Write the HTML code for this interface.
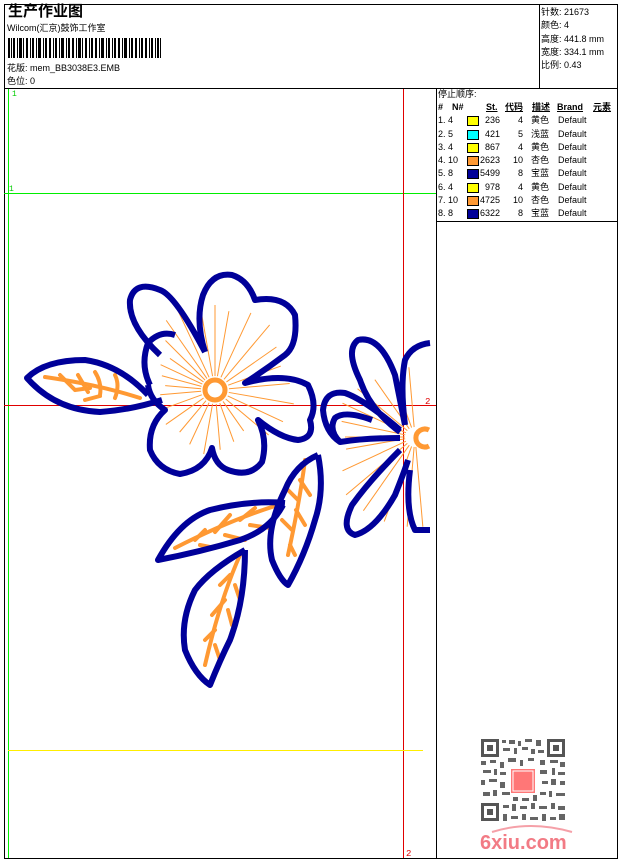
<!DOCTYPE html>
<html><head><meta charset="utf-8"><style>
*{margin:0;padding:0}
body{width:620px;height:860px;background:#fff;position:relative;overflow:hidden;font-family:"Liberation Sans","Noto Sans CJK SC",sans-serif;color:#000}
.t{position:absolute;white-space:nowrap;font-size:9px;line-height:10px}
.r{position:relative;height:13.3px;width:180px;white-space:nowrap}
.r span{position:absolute;white-space:nowrap}
</style></head><body>
<svg width="620" height="860" style="position:absolute;left:0;top:0">
<rect x="4.5" y="4.5" width="613" height="854" fill="none" stroke="#000" stroke-width="1"/>
<line x1="4" y1="88.5" x2="618" y2="88.5" stroke="#000"/>
<line x1="539.5" y1="4" x2="539.5" y2="88" stroke="#000"/>
<line x1="436.5" y1="88" x2="436.5" y2="858" stroke="#000"/>
<line x1="436" y1="221.5" x2="618" y2="221.5" stroke="#000"/>
<g fill="#000">
<rect x="8" y="38" width="2" height="20"/><rect x="11" y="38" width="1" height="20"/><rect x="13" y="38" width="2" height="20"/><rect x="17" y="38" width="1" height="20"/><rect x="19" y="38" width="3" height="20"/><rect x="23" y="38" width="1" height="20"/><rect x="26" y="38" width="2" height="20"/><rect x="30" y="38" width="1" height="20"/><rect x="32" y="38" width="2" height="20"/><rect x="36" y="38" width="1" height="20"/><rect x="38" y="38" width="3" height="20"/><rect x="43" y="38" width="1" height="20"/><rect x="45" y="38" width="2" height="20"/><rect x="49" y="38" width="2" height="20"/><rect x="53" y="38" width="1" height="20"/><rect x="55" y="38" width="2" height="20"/><rect x="59" y="38" width="1" height="20"/><rect x="61" y="38" width="3" height="20"/><rect x="66" y="38" width="1" height="20"/><rect x="68" y="38" width="2" height="20"/><rect x="72" y="38" width="2" height="20"/><rect x="76" y="38" width="1" height="20"/><rect x="78" y="38" width="3" height="20"/><rect x="82" y="38" width="1" height="20"/><rect x="85" y="38" width="2" height="20"/><rect x="89" y="38" width="1" height="20"/><rect x="91" y="38" width="2" height="20"/><rect x="95" y="38" width="2" height="20"/><rect x="99" y="38" width="1" height="20"/><rect x="101" y="38" width="3" height="20"/><rect x="106" y="38" width="1" height="20"/><rect x="108" y="38" width="2" height="20"/><rect x="112" y="38" width="1" height="20"/><rect x="114" y="38" width="2" height="20"/><rect x="118" y="38" width="2" height="20"/><rect x="122" y="38" width="1" height="20"/><rect x="124" y="38" width="3" height="20"/><rect x="129" y="38" width="1" height="20"/><rect x="131" y="38" width="2" height="20"/><rect x="135" y="38" width="2" height="20"/><rect x="139" y="38" width="1" height="20"/><rect x="141" y="38" width="2" height="20"/><rect x="145" y="38" width="2" height="20"/><rect x="149" y="38" width="1" height="20"/><rect x="151" y="38" width="2" height="20"/><rect x="155" y="38" width="1" height="20"/><rect x="157" y="38" width="2" height="20"/><rect x="160" y="38" width="1" height="20"/>
</g>
<line x1="8.5" y1="89" x2="8.5" y2="858" stroke="#00ee00"/>
<line x1="4" y1="193.5" x2="436" y2="193.5" stroke="#00ee00"/>
<line x1="403.5" y1="89" x2="403.5" y2="858" stroke="#e00000"/>
<line x1="4" y1="405.5" x2="436" y2="405.5" stroke="#e00000"/>
<line x1="8" y1="750.5" x2="423" y2="750.5" stroke="#ffee00"/>
<text x="12" y="96" font-size="8" fill="#00cc00" font-family="Liberation Mono">1</text>
<text x="9" y="191" font-size="8" fill="#00cc00" font-family="Liberation Mono">1</text>
<text x="425" y="404" font-size="9" fill="#e00000" font-family="Liberation Mono">2</text>
<text x="406" y="856" font-size="9" fill="#e00000" font-family="Liberation Mono">2</text>
<g stroke="#ff9933" stroke-width="1">
<g transform="translate(215,390)">
<line x1="14" y1="0" x2="75" y2="0" transform="rotate(-100)"/><line x1="14" y1="0" x2="90" y2="0" transform="rotate(-115)"/><line x1="14" y1="0" x2="85" y2="0" transform="rotate(-125)"/><line x1="14" y1="0" x2="70" y2="0" transform="rotate(-135)"/><line x1="14" y1="0" x2="55" y2="0" transform="rotate(-145)"/><line x1="14" y1="0" x2="60" y2="0" transform="rotate(-155)"/><line x1="14" y1="0" x2="55" y2="0" transform="rotate(-165)"/><line x1="14" y1="0" x2="50" y2="0" transform="rotate(-175)"/><line x1="14" y1="0" x2="55" y2="0" transform="rotate(175)"/><line x1="14" y1="0" x2="55" y2="0" transform="rotate(160)"/><line x1="14" y1="0" x2="60" y2="0" transform="rotate(145)"/><line x1="14" y1="0" x2="55" y2="0" transform="rotate(130)"/><line x1="14" y1="0" x2="60" y2="0" transform="rotate(115)"/><line x1="14" y1="0" x2="65" y2="0" transform="rotate(100)"/><line x1="14" y1="0" x2="60" y2="0" transform="rotate(85)"/><line x1="14" y1="0" x2="55" y2="0" transform="rotate(70)"/><line x1="14" y1="0" x2="50" y2="0" transform="rotate(55)"/><line x1="14" y1="0" x2="70" y2="0" transform="rotate(40)"/><line x1="14" y1="0" x2="75" y2="0" transform="rotate(25)"/><line x1="14" y1="0" x2="80" y2="0" transform="rotate(10)"/><line x1="14" y1="0" x2="75" y2="0" transform="rotate(-5)"/><line x1="14" y1="0" x2="70" y2="0" transform="rotate(-20)"/><line x1="14" y1="0" x2="75" y2="0" transform="rotate(-35)"/><line x1="14" y1="0" x2="85" y2="0" transform="rotate(-50)"/><line x1="14" y1="0" x2="85" y2="0" transform="rotate(-65)"/><line x1="14" y1="0" x2="80" y2="0" transform="rotate(-80)"/><line x1="14" y1="0" x2="85" y2="0" transform="rotate(-90)"/>
</g>
<g transform="translate(415,437)">
<line x1="10" y1="0" x2="70" y2="0" transform="rotate(-95)"/><line x1="10" y1="0" x2="70" y2="0" transform="rotate(-110)"/><line x1="10" y1="0" x2="70" y2="0" transform="rotate(-125)"/><line x1="10" y1="0" x2="75" y2="0" transform="rotate(-140)"/><line x1="10" y1="0" x2="80" y2="0" transform="rotate(-155)"/><line x1="10" y1="0" x2="75" y2="0" transform="rotate(-168)"/><line x1="10" y1="0" x2="70" y2="0" transform="rotate(-180)"/><line x1="10" y1="0" x2="70" y2="0" transform="rotate(170)"/><line x1="10" y1="0" x2="80" y2="0" transform="rotate(155)"/><line x1="10" y1="0" x2="90" y2="0" transform="rotate(140)"/><line x1="10" y1="0" x2="90" y2="0" transform="rotate(125)"/><line x1="10" y1="0" x2="90" y2="0" transform="rotate(110)"/><line x1="10" y1="0" x2="90" y2="0" transform="rotate(95)"/><line x1="10" y1="0" x2="90" y2="0" transform="rotate(85)"/>
</g>
</g>
<circle cx="215" cy="390" r="10" fill="none" stroke="#ff9933" stroke-width="5"/>
<path d="M429,430 A9,9 0 1,0 429,446" fill="none" stroke="#ff9933" stroke-width="5"/>
<g stroke="#ff9933" stroke-width="4" fill="none" stroke-linecap="round">
<path d="M45,377 Q100,385 140,398"/><path d="M60,375 L75,390 M78,375 L88,392 M95,372 Q102,383 100,395 M115,375 Q120,385 115,398 M75,390 L90,388 M85,400 L100,396"/>
<path d="M278,505 Q230,520 175,548"/><path d="M195,540 L205,530 M215,532 L230,515 M240,520 L255,508 M200,545 L215,548 M225,535 L245,540 M250,525 L270,528"/>
<path d="M305,460 Q300,500 288,555"/><path d="M300,480 L310,495 M298,500 L288,490 M296,510 L305,525 M292,530 L282,520 M290,545 L295,555"/>
<path d="M240,555 Q220,600 205,665"/><path d="M230,575 L220,585 M235,585 L240,600 M225,600 L212,615 M228,610 L232,625 M215,630 L205,640 M215,645 L220,660"/>
</g>
<g fill="none" stroke="#000099" stroke-width="6" stroke-linejoin="round">
<path d="M205,352 Q195,320 203,295 Q212,272 232,275 Q248,280 255,300 Q285,295 295,315 Q298,345 285,355 Q265,370 245,383 Q285,372 308,385 Q318,405 310,420 Q315,438 298,440 Q280,438 258,420 Q268,440 262,462 Q250,478 228,470 Q215,465 212,448 Q205,470 180,474 Q158,470 150,450 Q148,425 165,410 Q150,400 148,385 M175,335 Q160,330 148,343 Q140,365 150,385 M205,352 Q175,295 160,290 Q135,280 130,300 Q128,325 160,355"/>
<path d="M148,395 Q120,365 85,360 Q45,360 27,378 Q55,410 100,412 Q130,410 162,400"/>
<path d="M285,503 Q250,500 210,510 Q180,520 158,560 Q200,552 240,540 Q270,530 283,505"/>
<path d="M318,455 Q295,465 285,490 Q265,530 272,560 Q280,580 288,585 Q305,555 315,520 Q325,490 318,455"/>
<path d="M245,550 Q210,570 195,590 Q180,620 185,650 Q195,675 210,685 Q220,660 230,640 Q245,600 245,550"/>
<path d="M400,432 Q370,410 360,380 Q345,350 358,340 Q380,335 395,375 Q400,400 405,425 M405,425 Q400,385 405,360 Q412,345 430,343 M400,438 Q365,438 340,442 Q328,430 335,418 Q345,410 372,420 M340,442 Q325,432 323,410 Q325,390 345,393 Q365,400 400,430 M400,450 Q370,480 352,505 Q340,530 355,535 Q375,530 395,495 Q405,470 408,460 M410,470 Q405,510 415,530 L430,530"/>
</g>
<g fill="#555">
<rect x="481" y="739" width="18" height="18"/><rect x="547" y="739" width="18" height="18"/><rect x="481" y="803" width="18" height="18"/>
</g>
<g fill="#fff"><rect x="484" y="742" width="12" height="12"/><rect x="550" y="742" width="12" height="12"/><rect x="484" y="806" width="12" height="12"/></g>
<g fill="#555"><rect x="487" y="745" width="6" height="6"/><rect x="553" y="745" width="6" height="6"/><rect x="487" y="809" width="6" height="6"/></g>
<g fill="#555" opacity="0.9">
<rect x="502" y="740" width="4" height="3"/><rect x="509" y="740" width="6" height="4"/><rect x="518" y="741" width="3" height="5"/><rect x="525" y="739" width="7" height="3"/><rect x="536" y="740" width="5" height="6"/><rect x="503" y="748" width="7" height="3"/><rect x="514" y="748" width="3" height="6"/><rect x="522" y="747" width="6" height="3"/><rect x="531" y="749" width="4" height="5"/><rect x="538" y="750" width="6" height="3"/>
<rect x="481" y="761" width="5" height="4"/><rect x="490" y="760" width="6" height="3"/><rect x="500" y="762" width="4" height="6"/><rect x="508" y="758" width="8" height="4"/><rect x="520" y="760" width="3" height="6"/><rect x="528" y="758" width="6" height="3"/><rect x="540" y="760" width="5" height="5"/><rect x="550" y="760" width="8" height="3"/><rect x="560" y="762" width="5" height="5"/>
<rect x="483" y="770" width="8" height="3"/><rect x="494" y="769" width="3" height="6"/><rect x="500" y="772" width="6" height="3"/><rect x="540" y="770" width="7" height="4"/><rect x="552" y="768" width="3" height="7"/><rect x="558" y="772" width="7" height="3"/>
<rect x="481" y="780" width="4" height="5"/><rect x="489" y="779" width="8" height="3"/><rect x="500" y="782" width="5" height="6"/><rect x="542" y="781" width="6" height="3"/><rect x="551" y="779" width="5" height="6"/><rect x="560" y="781" width="5" height="4"/>
<rect x="483" y="792" width="7" height="4"/><rect x="493" y="790" width="4" height="6"/><rect x="502" y="792" width="8" height="3"/><rect x="513" y="797" width="5" height="4"/><rect x="522" y="798" width="7" height="3"/><rect x="533" y="795" width="4" height="6"/><rect x="540" y="792" width="6" height="3"/><rect x="549" y="791" width="3" height="6"/><rect x="556" y="793" width="9" height="3"/>
<rect x="503" y="805" width="6" height="3"/><rect x="512" y="804" width="4" height="7"/><rect x="520" y="806" width="7" height="3"/><rect x="531" y="803" width="4" height="6"/><rect x="539" y="806" width="8" height="3"/><rect x="551" y="803" width="4" height="6"/><rect x="558" y="806" width="7" height="4"/>
<rect x="503" y="814" width="4" height="7"/><rect x="511" y="816" width="7" height="3"/><rect x="522" y="814" width="4" height="6"/><rect x="530" y="817" width="8" height="3"/><rect x="542" y="814" width="4" height="7"/><rect x="550" y="817" width="6" height="3"/><rect x="559" y="814" width="6" height="6"/>
</g>
<rect x="511" y="769" width="24" height="24" fill="#ff7777"/>
<rect x="513" y="771" width="20" height="20" fill="none" stroke="#fff" stroke-width="1"/>
<text x="480" y="849" font-size="20" font-weight="bold" fill="#f27b85" font-family="Liberation Sans">6xiu.com</text>
<path d="M492,832 Q530,820 572,832" fill="none" stroke="#f5a0a8" stroke-width="2"/>
</svg>
<div class="t" style="left:8px;top:3px;font-size:15px;line-height:18px;font-weight:bold">生产作业图</div>
<div class="t" style="left:7px;top:23px">Wilcom(汇京)鼓饰工作室</div>
<div class="t" style="left:7px;top:63px">花版: mem_BB3038E3.EMB</div>
<div class="t" style="left:7px;top:76px">色位: 0</div>
<div class="t" style="left:541px;top:6px;line-height:13.3px">针数: 21673<br>颜色: 4<br>高度: 441.8 mm<br>宽度: 334.1 mm<br>比例: 0.43</div>
<div class="t" style="left:438px;top:89px">停止顺序:</div>
<div style="position:absolute;left:438px;top:101px;font-size:9px;line-height:13.3px;width:180px">
<div class="r" style="font-weight:bold">
<span style="left:0">#</span><span style="left:14px">N#</span><span style="left:48px;text-decoration:underline">St.</span><span style="left:67px;text-decoration:underline">代码</span><span style="left:94px;text-decoration:underline">描述</span><span style="left:119px;text-decoration:underline">Brand</span><span style="left:155px;text-decoration:underline">元素</span>
</div>
<div class="r"><span style="left:0">1. 4</span><span style="left:29px;top:2px;width:10px;height:8px;background:#ffff00;border:1px solid #000"></span><span style="left:44px;width:18px;text-align:right">236</span><span style="left:65px;width:20px;text-align:right">4</span><span style="left:93px">黄色</span><span style="left:120px">Default</span></div>
<div class="r"><span style="left:0">2. 5</span><span style="left:29px;top:2px;width:10px;height:8px;background:#00ffff;border:1px solid #000"></span><span style="left:44px;width:18px;text-align:right">421</span><span style="left:65px;width:20px;text-align:right">5</span><span style="left:93px">浅蓝</span><span style="left:120px">Default</span></div>
<div class="r"><span style="left:0">3. 4</span><span style="left:29px;top:2px;width:10px;height:8px;background:#ffff00;border:1px solid #000"></span><span style="left:44px;width:18px;text-align:right">867</span><span style="left:65px;width:20px;text-align:right">4</span><span style="left:93px">黄色</span><span style="left:120px">Default</span></div>
<div class="r"><span style="left:0">4. 10</span><span style="left:29px;top:2px;width:10px;height:8px;background:#ff9933;border:1px solid #000"></span><span style="left:41px;width:21px;text-align:right">2623</span><span style="left:65px;width:20px;text-align:right">10</span><span style="left:93px">杏色</span><span style="left:120px">Default</span></div>
<div class="r"><span style="left:0">5. 8</span><span style="left:29px;top:2px;width:10px;height:8px;background:#000099;border:1px solid #000"></span><span style="left:41px;width:21px;text-align:right">5499</span><span style="left:65px;width:20px;text-align:right">8</span><span style="left:93px">宝蓝</span><span style="left:120px">Default</span></div>
<div class="r"><span style="left:0">6. 4</span><span style="left:29px;top:2px;width:10px;height:8px;background:#ffff00;border:1px solid #000"></span><span style="left:44px;width:18px;text-align:right">978</span><span style="left:65px;width:20px;text-align:right">4</span><span style="left:93px">黄色</span><span style="left:120px">Default</span></div>
<div class="r"><span style="left:0">7. 10</span><span style="left:29px;top:2px;width:10px;height:8px;background:#ff9933;border:1px solid #000"></span><span style="left:41px;width:21px;text-align:right">4725</span><span style="left:65px;width:20px;text-align:right">10</span><span style="left:93px">杏色</span><span style="left:120px">Default</span></div>
<div class="r"><span style="left:0">8. 8</span><span style="left:29px;top:2px;width:10px;height:8px;background:#000099;border:1px solid #000"></span><span style="left:41px;width:21px;text-align:right">6322</span><span style="left:65px;width:20px;text-align:right">8</span><span style="left:93px">宝蓝</span><span style="left:120px">Default</span></div>
</div>
</body></html>
